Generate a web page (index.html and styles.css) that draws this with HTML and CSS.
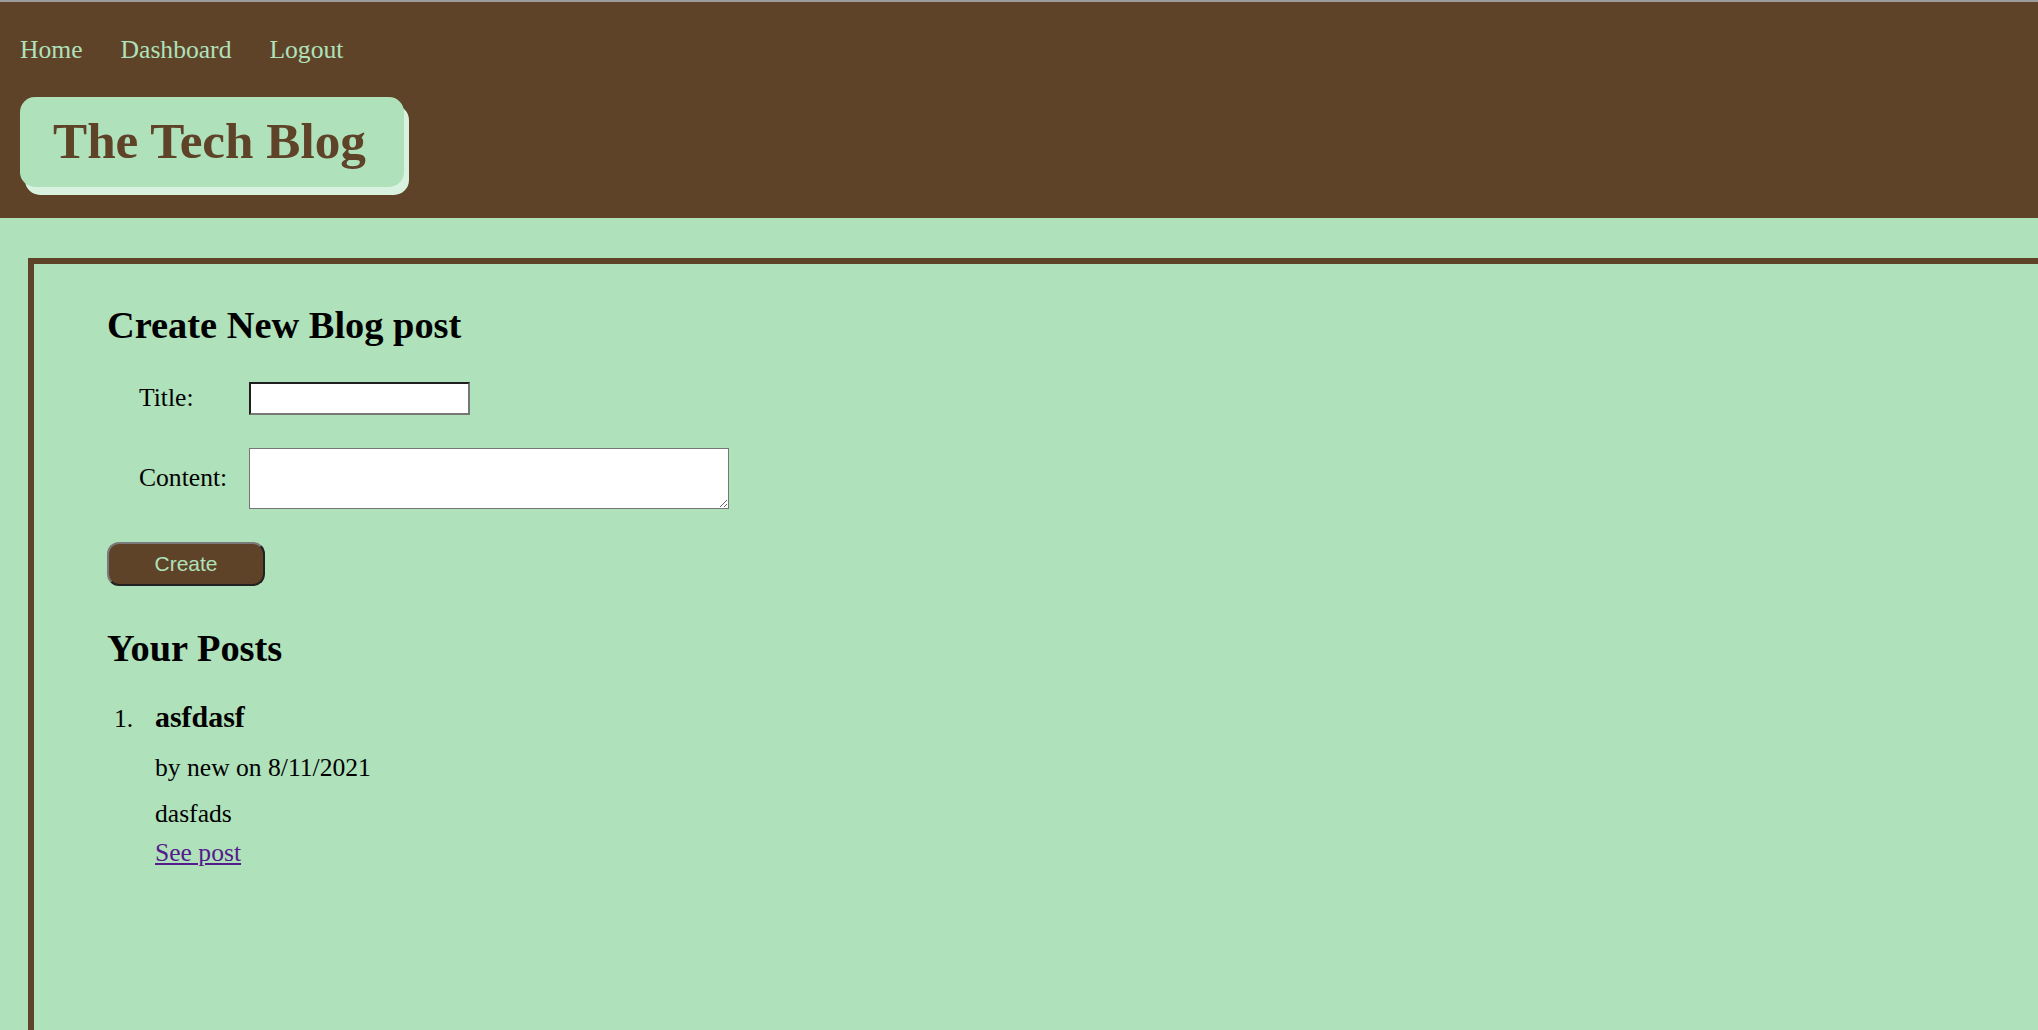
FILE: index.html
```html
<!DOCTYPE html>
<html lang="en">
<head>
<meta charset="utf-8">
<title>The Tech Blog</title>
<link rel="stylesheet" href="styles.css">
</head>
<body>
<header class="site-header">
  <nav class="nav">
    <a href="#">Home</a>
    <a href="#">Dashboard</a>
    <a href="#">Logout</a>
  </nav>
  <h1 class="brand">The Tech Blog</h1>
</header>
<main class="dashboard">
  <section class="new-post">
    <h2 class="section-title">Create New Blog post</h2>
    <form class="post-form">
      <div class="fields">
        <label class="field-label" for="title">Title:</label>
        <input class="title-input" id="title" type="text">
        <label class="field-label" for="content">Content:</label>
        <textarea class="content-input" id="content"></textarea>
      </div>
      <button class="create-btn" type="button">Create</button>
    </form>
  </section>
  <section class="your-posts">
    <h2 class="section-title posts-title">Your Posts</h2>
    <ol class="post-list">
      <li class="post-item">
        <div class="post-body">
          <h3 class="post-title">asfdasf</h3>
          <p class="post-meta">by new on 8/11/2021</p>
          <p class="post-text">dasfads</p>
          <a class="post-link" href="#">See post</a>
        </div>
      </li>
    </ol>
  </section>
</main>
</body>
</html>
```
FILE: styles.css
```css
html {
  overflow: hidden;
}
body {
  margin: 0;
  background: #afe1bb;
  font-family: "Liberation Serif", "Times New Roman", serif;
  font-size: 25.6px;
  color: #000;
  overflow: hidden;
}
.site-header {
  background: #5f4328;
  border-top: 2px solid #9b9b9b;
  padding: 33px 20px 31px 20px;
  display: flex;
  flex-direction: column;
  align-items: flex-start;
  gap: 32px;
}
.nav {
  display: flex;
  gap: 38px;
}
.nav a {
  color: #afe1bb;
  text-decoration: none;
}
.brand {
  margin: 0;
  font-size: 51.2px;
  font-weight: bold;
  color: #5f4328;
  background: #afe1bb;
  border-radius: 15px;
  padding: 14px 38px 16.5px 33px;
  box-shadow: 5px 8px 0 #d9f1df;
}
.dashboard {
  margin: 40px 0 0 28px;
  border: 6px solid #5f4328;
  width: 100%;
  min-height: 900px;
  padding: 39px 0 0 73px;
}
.section-title {
  font-size: 38.4px;
  margin: 0 0 35px 0;
}
.fields {
  display: grid;
  grid-template-columns: max-content max-content;
  column-gap: 22px;
  row-gap: 33px;
  align-items: center;
  justify-content: start;
  margin-left: 32px;
}
.field-label {
  font-size: 25.6px;
}
.title-input {
  box-sizing: border-box;
  width: 221px;
  height: 33px;
  background: #fff;
  border: 2px solid;
  border-color: #1f1f1f #767676 #767676 #1f1f1f;
  margin: 0;
}
.content-input {
  box-sizing: border-box;
  width: 480px;
  height: 61px;
  background: #fff;
  border: 1px solid #767676;
  margin: 0;
}
.create-btn {
  display: block;
  margin-top: 33px;
  box-sizing: border-box;
  width: 158px;
  height: 44px;
  border-radius: 12px;
  border: 2px solid;
  border-color: #7a7a7a #222 #222 #7a7a7a;
  background: #5f4328;
  color: #afe1bb;
  font-family: "Liberation Sans", Arial, sans-serif;
  font-size: 21px;
  padding: 0;
}
.posts-title {
  margin: 40px 0 30.5px 0;
}
.post-list {
  margin: 0;
  padding: 0 0 0 7px;
  list-style: none;
  counter-reset: post;
}
.post-item {
  display: flex;
  align-items: baseline;
  counter-increment: post;
}
.post-item::before {
  content: counter(post) ".";
  flex: 0 0 41px;
}
.post-title {
  font-size: 29.95px;
  margin: 0 0 18.5px 0;
}
.post-meta {
  margin: 0 0 16px 0;
}
.post-text {
  margin: 0 0 9px 0;
}
.post-link {
  color: #551a8b;
}
```
